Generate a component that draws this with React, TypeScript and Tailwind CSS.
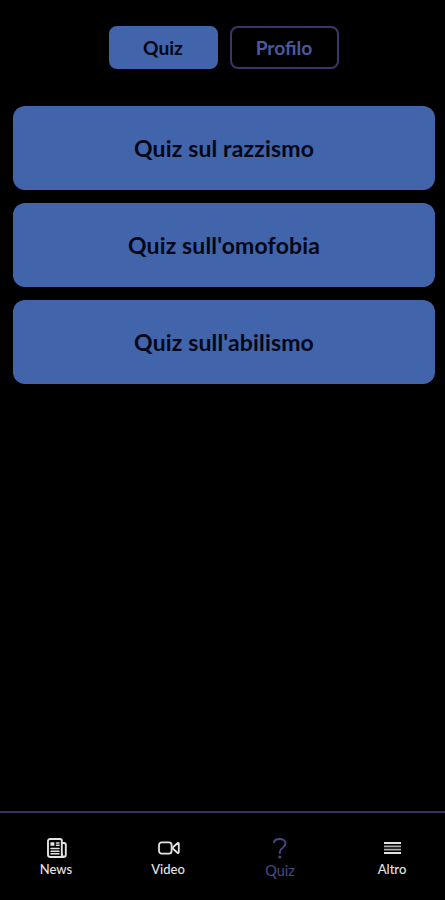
import { ReactNode, useState } from "react";

const quizzes = ["Quiz sul razzismo", "Quiz sull'omofobia", "Quiz sull'abilismo"];

const NewsIcon = () => (
  <svg className="ml-[2px]" width="20" height="20" viewBox="0 0 20 20" fill="none" stroke="currentColor" strokeLinejoin="round" strokeLinecap="round">
    <path d="M3 1h10a1.8 1.8 0 0 1 1.8 1.8v14.4a1.8 1.8 0 0 0 1.8 1.8H3.2A2.2 2.2 0 0 1 1 16.8V3a2 2 0 0 1 2-2Z" strokeWidth="1.9" />
    <path d="M15 5h2a1.8 1.8 0 0 1 1.8 1.8v10a1.9 1.9 0 0 1-3.8 0" strokeWidth="1.9" />
    <path d="M9.5 5h2.5M9.5 7.3h2.5M4 10.5h8M4 13.2h8M4 15.8h8" strokeWidth="1.5" />
    <rect x="3.4" y="4.2" width="4" height="3.6" rx="0.5" fill="currentColor" stroke="none" />
  </svg>
);

const VideoIcon = () => (
  <svg className="ml-[2px]" width="22" height="14" viewBox="0 0 22 14" fill="none" stroke="currentColor" strokeWidth="1.8" strokeLinejoin="round">
    <rect x="1" y="1.4" width="12.6" height="11.2" rx="2.6" />
    <path d="M20.8 2.6v8.8a.7.7 0 0 1-1.1.6l-3.9-3.5a1.8 1.8 0 0 1 0-3l3.9-3.5a.7.7 0 0 1 1.1.6Z" />
  </svg>
);

const HelpIcon = () => (
  <svg width="14" height="21" viewBox="0 0 14 21" fill="none" stroke="currentColor" strokeWidth="1.9" strokeLinecap="round">
    <path d="M1 4.4C1.4 2 3.5 1 6.5 1c3.6 0 6 1.8 6 4.4 0 2.2-1.2 3.3-2.8 4.4C7.9 11 6.8 12 6.8 14v1" />
    <circle cx="6.8" cy="19.1" r="1.5" fill="currentColor" stroke="none" />
  </svg>
);

const MenuIcon = () => (
  <svg width="17" height="12" viewBox="0 0 17 12" fill="none" stroke="currentColor">
    <path d="M0 1h17M0 11h17" strokeWidth="1.8" />
    <path d="M0 4.3h17M0 7.6h17" strokeWidth="1.8" opacity="0.75" />
  </svg>
);

const TopTab: React.FC<{
  label: string;
  active: boolean;
  onClick: () => void;
}> = ({ label, active, onClick }) => (
  <button
    className={`flex h-[43px] w-[109px] items-center justify-center rounded-lg border-2 text-[19.2px] leading-none font-bold ${
      active
        ? "border-[#4164aa] bg-[#4164aa] text-[#030717]"
        : "border-[#38366b] text-[#4a59a0]"
    }`}
    onClick={onClick}
  >
    {label}
  </button>
);

const NavItem: React.FC<{
  label: string;
  icon: ReactNode;
  active?: boolean;
}> = ({ label, icon, active }) => (
  <button
    className={`flex flex-1 flex-col items-center ${
      active ? "text-[#4b4888]" : "text-[#e4e4e4]"
    }`}
  >
    <div className="flex h-6 items-center justify-center">{icon}</div>
    <span
      className={`leading-[18px] ${
        active ? "pt-[2px] text-[14.5px]" : "text-[13px] font-medium"
      }`}
    >
      {label}
    </span>
  </button>
);

export default function App() {
  const [tab, setTab] = useState("Quiz");

  return (
    <div className="flex h-screen w-full flex-col overflow-hidden bg-black font-['Lato',sans-serif]">
      <div className="flex justify-center gap-3 pt-[26px] pl-[2px]">
        {["Quiz", "Profilo"].map((label) => (
          <TopTab
            key={label}
            label={label}
            active={tab === label}
            onClick={() => setTab(label)}
          />
        ))}
      </div>

      <div className="flex flex-1 flex-col gap-[12.5px] pt-[37px] pr-[10px] pl-[13px]">
        {quizzes.map((quiz) => (
          <button
            key={quiz}
            className="flex h-[84.3px] items-center justify-center rounded-xl bg-[#4164aa] pt-px text-[23px] leading-none font-bold tracking-[0.15px] text-[#030717]"
          >
            {quiz}
          </button>
        ))}
      </div>

      <nav className="-mr-[3px] flex h-[89px] border-t-2 border-[#34315f] pt-[23px]">
        <NavItem label="News" icon={<NewsIcon />} />
        <NavItem label="Video" icon={<VideoIcon />} />
        <NavItem label="Quiz" icon={<HelpIcon />} active />
        <NavItem label="Altro" icon={<MenuIcon />} />
      </nav>
    </div>
  );
}
